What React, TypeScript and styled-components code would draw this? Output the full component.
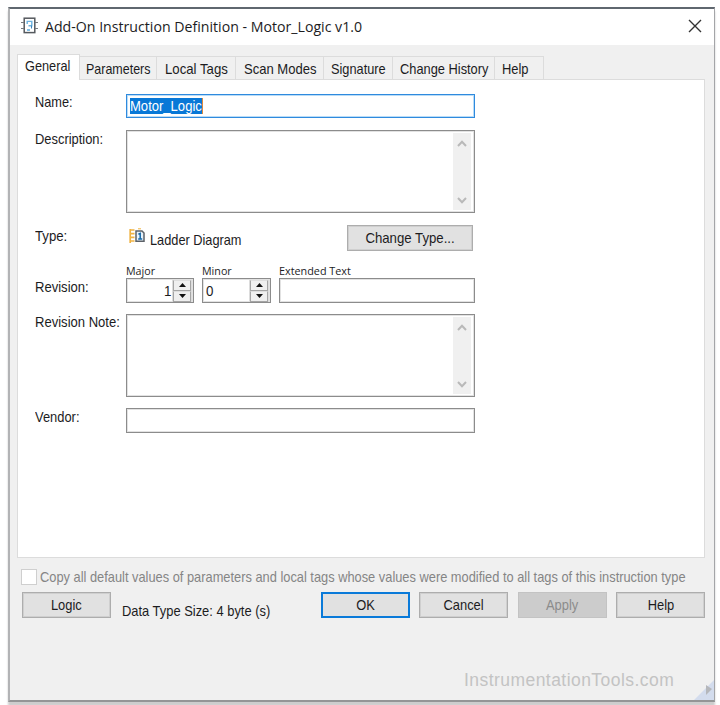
import React from "react";
import styled, { createGlobalStyle } from "styled-components";

const GlobalStyle = createGlobalStyle`
  * { box-sizing: border-box; }
  body { margin: 0; background: #fff; overflow: hidden; }
`;

const Page = styled.div`
  height: 705px;
  padding: 7px 0 0 8px;
  overflow: hidden;
  background: #fff;
  font-family: "Liberation Sans", Arial, sans-serif;
  font-size: 14.5px;
  line-height: 16px;
  color: #1c1c1e;
`;

const Dialog = styled.div`
  position: relative;
  display: flex;
  flex-direction: column;
  width: 707px;
  height: 695px;
  background: #f0f0f0;
  border: 2px solid #b2b3b5;
  border-top-color: #5f676f;
  border-right: 1px solid #a4a5a8;
  border-bottom-color: #949596;
  box-shadow: 0 4px 2px #cdcdcd;
`;

const Text = styled.span<{ $scale?: number }>`
  display: inline-block;
  white-space: pre;
  transform: scaleX(${(p) => p.$scale ?? 0.89});
  transform-origin: left center;
`;

const CenterText = styled(Text)`
  transform-origin: center;
`;

const TitleBar = styled.div`
  display: flex;
  height: 36px;
  padding: 8px 12px 0 11px;
  background: #fff;
`;

const TitleText = styled(Text)`
  flex: 1;
  margin: -1px 0 0 7px;
  font-family: "Open Sans", "Noto Sans", sans-serif;
  font-size: 15px;
  line-height: 20px;
`;

const Tabs = styled.div`
  display: flex;
  align-items: flex-end;
  height: 34px;
  padding-left: 7px;
`;

const Tab = styled.div<{ $width: number; $inset: number; $active?: boolean }>`
  width: ${(p) => p.$width}px;
  height: ${(p) => (p.$active ? 26 : 23)}px;
  padding: ${(p) => (p.$active ? 3 : 4)}px 0 0 ${(p) => p.$inset}px;
  margin-bottom: ${(p) => (p.$active ? -1 : 0)}px;
  background: ${(p) => (p.$active ? "#fff" : "#f0f0f0")};
  border: 1px solid #dcdcdc;
  border-bottom: 0;
  border-left-width: ${(p) => (p.$active ? 1 : 0)}px;
  z-index: ${(p) => (p.$active ? 1 : 0)};
`;

const Panel = styled.div`
  width: 688px;
  height: 479px;
  margin-left: 7px;
  padding: 14px 0 0 17px;
  background: #fff;
  border: 1px solid #dcdcdc;
`;

const Row = styled.div<{ $height: number }>`
  display: grid;
  grid-template-columns: 91px 349px;
  align-items: start;
  height: ${(p) => p.$height}px;
`;

const FieldLabel = styled.label<{ $top?: number }>`
  padding-top: ${(p) => p.$top ?? 0}px;
  white-space: nowrap;
`;

const Field = styled.div<{ $focus?: boolean }>`
  display: flex;
  align-items: center;
  height: 25px;
  padding: 0 3px;
  background: #fff;
  border: ${(p) => (p.$focus ? "1px solid #2f8ade" : "1px solid #8c8c8c")};
  box-shadow: ${(p) => (p.$focus ? "inset 0 0 0 1px #b9dcf7" : "inset 0 0 0 1px #e2e2e2")};
`;

const NameField = styled(Field)`
  height: 24px;
  padding-bottom: 1px;
`;

const Selection = styled.div`
  width: 73px;
  height: 16px;
  color: #fff;
  background: #0878d7;
  border-right: 1px solid #e08a3c;
`;

const Area = styled.div`
  display: flex;
  justify-content: flex-end;
  height: 83px;
  padding: 2px 3px 2px 0;
  background: #fff;
  border: 1px solid #8c8c8c;
  box-shadow: inset 0 0 0 1px #e2e2e2;
`;

const Scroll = styled.div`
  display: flex;
  flex-direction: column;
  justify-content: space-between;
  align-items: center;
  width: 18px;
  padding: 7px 0 6px;
  background: #f0f0f0;
`;

const TypeLine = styled.div`
  display: flex;
  padding-left: 3px;
`;

const TypeName = styled.div`
  width: 201px;
  padding: 7px 0 0 4px;
`;

const TypeIcon = styled.svg`
  margin-top: 3px;
`;

const Button = styled.button<{ $kind?: "default" | "disabled"; $width?: number }>`
  flex: none;
  display: flex;
  justify-content: center;
  align-items: center;
  width: ${(p) => p.$width ?? 89}px;
  height: 26px;
  padding: 0 0 1px;
  font: inherit;
  color: ${(p) => (p.$kind === "disabled" ? "#8b8b8b" : "#1c1c1e")};
  background: ${(p) => (p.$kind === "disabled" ? "#cccccc" : "#e1e1e1")};
  border: ${(p) =>
    p.$kind === "default" ? "2px solid #0a7ad9" : p.$kind === "disabled" ? "1px solid #c3c3c3" : "1px solid #adadad"};
  box-shadow: ${(p) => (p.$kind ? "none" : "inset 0 0 0 1px #cfcfcf")};
`;

const RevisionFields = styled.div`
  display: grid;
  grid-template-columns: 68px 69px 196px;
  column-gap: 8px;
`;

const SmallLabel = styled.div`
  height: 13px;
  font-family: "Open Sans", "Noto Sans", sans-serif;
  font-size: 11.5px;
  line-height: 11px;
`;

const SpinField = styled(Field)<{ $end?: boolean }>`
  justify-content: ${(p) => (p.$end ? "flex-end" : "space-between")};
  padding: 0 1px 0 3px;
  font-size: 15px;
`;

const Spinner = styled.div`
  display: grid;
  grid-template-rows: 11px 11px;
  width: 20px;
  padding: 0 1px;
  background: #dcdcdc;
`;

const SpinButton = styled.div`
  display: grid;
  place-items: center;
  background: #efefef;
  border: 1px solid #a5a5a5;
  border-top-color: #dedede;
`;

const CopyOption = styled.div`
  display: flex;
  height: 34px;
  padding: 11px 0 0 11px;
  color: #858585;
`;

const CheckBox = styled.div`
  flex: none;
  width: 16px;
  height: 16px;
  margin-right: 3px;
  background: #fff;
  border: 1px solid #cfcfcf;
`;

const Footer = styled.div`
  display: flex;
  height: 26px;
  padding-left: 12px;
`;

const DataSize = styled.div`
  flex: none;
  width: 210px;
  padding: 11px 0 0 11px;
  white-space: nowrap;
`;

const Actions = styled.div`
  display: grid;
  grid-template-columns: repeat(4, 89px);
  column-gap: 9.4px;
`;

const Watermark = styled.div`
  margin: 51px 0 0 454px;
  font-size: 17.5px;
  line-height: 22px;
  letter-spacing: 0.45px;
  color: #c3c3c3;
`;

const Grip = styled.svg`
  position: absolute;
  right: 0;
  bottom: 0;
`;

function InstructionIcon() {
  return (
    <svg width="17" height="18" viewBox="0 0 17 18" fill="none">
      <rect x="3.2" y="1.2" width="10.6" height="14.4" stroke="#55595e" strokeWidth="1.5" />
      <path d="M0 5.5h3M0 11.5h3M14 5.5h3M14 11.5h3" stroke="#777b80" strokeWidth="1.2" />
      <path d="M6.2 7V4.4h4.6v4.4H7.5" stroke="#6db3e0" strokeWidth="1.4" />
      <path d="M10.5 8.5v3" stroke="#3d85bd" />
      <path d="M6 13h3" stroke="#62aee0" strokeWidth="1.6" />
    </svg>
  );
}

function LadderIcon() {
  return (
    <TypeIcon width="17" height="17" viewBox="0 0 17 17" fill="none">
      <path d="M1.2 1v14M1 2h4.5M1 5.7h4.5M1 9.4h4.5M1 13h4.5" stroke="#f0b343" strokeWidth="1.7" />
      <path d="M9 .8h3" stroke="#efb443" />
      <path d="M7 3h6l2 2v8.2H7z" fill="#e5f2fc" stroke="#5d6268" strokeWidth="1.5" />
      <path d="M9.4 6.2l1.8-.8v5.4M9.2 11h4" stroke="#1668a8" strokeWidth="1.5" />
    </TypeIcon>
  );
}

function Chevron({ down }: { down?: boolean }) {
  return (
    <svg width="10" height="7" viewBox="0 0 10 7" fill="none">
      <path d={down ? "M1 1l4 4.2L9 1" : "M1 6l4-4.2L9 6"} stroke="#b9b9b9" strokeWidth="2" />
    </svg>
  );
}

function TextArea() {
  return (
    <Area>
      <Scroll>
        <Chevron />
        <Chevron down />
      </Scroll>
    </Area>
  );
}

function SpinButtons() {
  return (
    <Spinner>
      <SpinButton>
        <svg width="7" height="4" viewBox="0 0 7 4"><path d="M0 4L3.5 0 7 4z" fill="#111" /></svg>
      </SpinButton>
      <SpinButton>
        <svg width="7" height="4" viewBox="0 0 7 4"><path d="M0 0h7L3.5 4z" fill="#111" /></svg>
      </SpinButton>
    </Spinner>
  );
}

const inactiveTabs = [
  { name: "Parameters", width: 77, scale: 0.86, inset: 5.5 },
  { name: "Local Tags", width: 79, scale: 0.91, inset: 7.5 },
  { name: "Scan Modes", width: 88, scale: 0.9, inset: 7.5 },
  { name: "Signature", width: 69, scale: 0.88, inset: 7 },
  { name: "Change History", width: 102, scale: 0.885, inset: 6.5 },
  { name: "Help", width: 49, scale: 0.89, inset: 7 },
];

export default function App() {
  return (
    <Page>
      <GlobalStyle />
      <Dialog>
        <TitleBar>
          <InstructionIcon />
          <TitleText $scale={0.943}>Add-On Instruction Definition - Motor_Logic v1.0</TitleText>
          <svg width="14" height="20" viewBox="0 0 14 20">
            <path d="M1 3l12 12M13 3L1 15" stroke="#333" strokeWidth="1.4" />
          </svg>
        </TitleBar>
        <Tabs>
          <Tab $width={63} $inset={7} $active><Text $scale={0.88}>General</Text></Tab>
          {inactiveTabs.map((t) => (
            <Tab key={t.name} $width={t.width} $inset={t.inset}><Text $scale={t.scale}>{t.name}</Text></Tab>
          ))}
        </Tabs>
        <Panel>
          <Row $height={36}>
            <FieldLabel><Text $scale={0.88}>Name:</Text></FieldLabel>
            <NameField $focus><Selection><Text $scale={0.9}>Motor_Logic</Text></Selection></NameField>
          </Row>
          <Row $height={95}>
            <FieldLabel $top={1}><Text>Description:</Text></FieldLabel>
            <TextArea />
          </Row>
          <Row $height={40}>
            <FieldLabel $top={3}><Text $scale={0.91}>Type:</Text></FieldLabel>
            <TypeLine>
              <LadderIcon />
              <TypeName><Text $scale={0.88}>Ladder Diagram</Text></TypeName>
              <Button $width={126}><CenterText $scale={0.91}>Change Type...</CenterText></Button>
            </TypeLine>
          </Row>
          <Row $height={49}>
            <FieldLabel $top={14}><Text $scale={0.9}>Revision:</Text></FieldLabel>
            <RevisionFields>
              <SmallLabel><Text $scale={0.93}>Major</Text></SmallLabel>
              <SmallLabel><Text $scale={0.93}>Minor</Text></SmallLabel>
              <SmallLabel><Text $scale={0.94}>Extended Text</Text></SmallLabel>
              <SpinField $end><Text>1</Text><SpinButtons /></SpinField>
              <SpinField><Text>0</Text><SpinButtons /></SpinField>
              <Field />
            </RevisionFields>
          </Row>
          <Row $height={94}>
            <FieldLabel><Text $scale={0.9}>Revision Note:</Text></FieldLabel>
            <TextArea />
          </Row>
          <Row $height={25}>
            <FieldLabel $top={1}><Text>Vendor:</Text></FieldLabel>
            <Field />
          </Row>
        </Panel>
        <CopyOption>
          <CheckBox />
          <Text $scale={0.885}>
            Copy all default values of parameters and local tags whose values were modified to all tags of this instruction type
          </Text>
        </CopyOption>
        <Footer>
          <Button><CenterText>Logic</CenterText></Button>
          <DataSize><Text>Data Type Size: 4 byte (s)</Text></DataSize>
          <Actions>
            <Button $kind="default"><CenterText>OK</CenterText></Button>
            <Button><CenterText>Cancel</CenterText></Button>
            <Button $kind="disabled"><CenterText>Apply</CenterText></Button>
            <Button><CenterText>Help</CenterText></Button>
          </Actions>
        </Footer>
        <Watermark>InstrumentationTools.com</Watermark>
        <Grip width="20" height="20" viewBox="0 0 20 20">
          <path d="M20 0v20H0z" fill="#d3dced" />
          <path d="M12 5l6 4-6 6z" fill="#b5b7bb" />
        </Grip>
      </Dialog>
    </Page>
  );
}
